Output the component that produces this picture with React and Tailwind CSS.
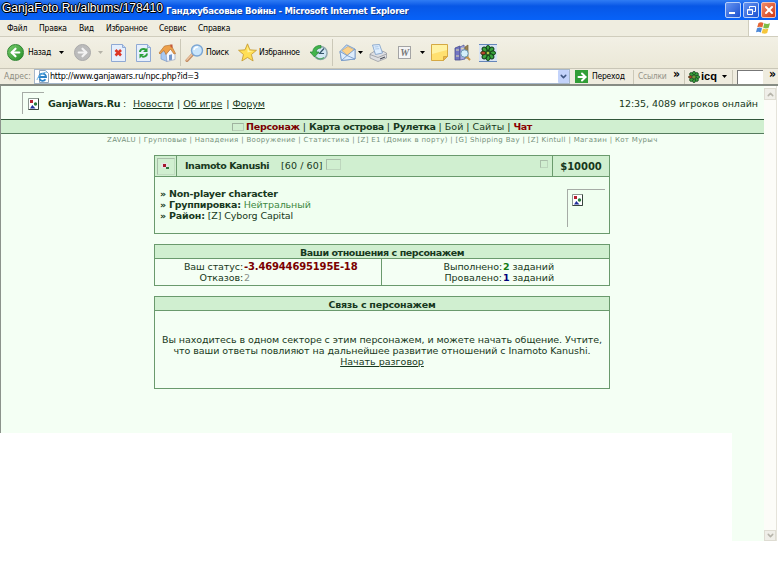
import { ArrowLeft, ArrowRight, ChevronDown, ChevronUp, X } from 'lucide-react'

const MENU = [
  { label: 'Файл', width: 'w-[32px]' },
  { label: 'Правка', width: 'w-[40px]' },
  { label: 'Вид', width: 'w-[27px]' },
  { label: 'Избранное', width: 'w-[53px]' },
  { label: 'Сервис', width: 'w-[39px]' },
  { label: 'Справка', width: 'w-[40px]' },
]

const SUB_NAV = [
  'ZAVALU', 'Групповые', 'Нападения', 'Вооружение', 'Статистика', '[Z] E1 (Домик в порту)',
  '[G] Shipping Bay', '[Z] Kintull', 'Магазин', 'Кот Мурыч',
]

// Small down triangle next to toolbar buttons
function Caret({ className = '' }) {
  return (
    <svg viewBox="0 0 5 3" className={`h-[3px] w-[5px] shrink-0 ${className}`}>
      <path d="M0 0h5L2.5 3z" fill="currentColor" />
    </svg>
  )
}

function Divider({ className = '' }) {
  return <span className={`w-px shrink-0 bg-[#cbc8b8] ${className}`} />
}

// Page sheet used by the stop and refresh buttons
function Sheet({ children }) {
  return (
    <svg viewBox="0 0 15 18" className="h-[18px] w-[15px] shrink-0">
      <path d="M.5.500h11l3 3v14H.5z" fill="#e6effc" stroke="#8fa9d4" />
      <path d="M11.500.5v3h3" fill="#c4d7f2" stroke="#8fa9d4" />
      {children}
    </svg>
  )
}

function HomeIcon() {
  return (
    <svg viewBox="0 0 18 18" className="h-[18px] w-[18px] shrink-0">
      <path d="M3 8v7l6 2.500V9L6 4z" fill="#a8c9f2" stroke="#7996c5" strokeWidth=".7" />
      <path d="M8 9.500l5-5 4 5v6l-8 2z" fill="#f7f9fd" stroke="#93a4c1" strokeWidth=".7" />
      <path d="M1 9l5.500-7L13 1l4.500 8.500-1.500.5-3.500-5L8 10.500l-2-4L2 10z" fill="#eda14b" stroke="#b77436" strokeWidth=".7" />
      <path d="M11 11l3-.7v5.500l-3 .7z" fill="#7295cb" />
      <path d="M12.500.5h2V4l-2-1z" fill="#c4593a" />
    </svg>
  )
}

function SearchIcon() {
  return (
    <svg viewBox="0 0 19 18" className="h-[18px] w-[19px] shrink-0">
      <path d="M2 16.500l6-6.500" stroke="#c48d64" strokeWidth="3.200" strokeLinecap="round" />
      <path d="M1.800 16l5.700-6" stroke="#efc6a2" strokeWidth="1.200" strokeLinecap="round" />
      <circle cx="12" cy="6.500" r="5.500" fill="#c9e5fb" stroke="#7ba6d3" strokeWidth="1.400" />
      <path d="M9 6a3.500 3.500 0 0 1 4-3" stroke="#fff" strokeWidth="1.500" fill="none" />
    </svg>
  )
}

function StarIcon() {
  return (
    <svg viewBox="0 0 18 18" className="h-[19px] w-[19px] shrink-0">
      <path d="M9 .8l2.300 5.700 6.200.4-4.800 4 1.600 6.100L9 13.700 3.700 17l1.500-6.100-4.700-4 6.100-.4z" fill="#ffdf55" stroke="#c69a32" strokeWidth=".8" />
      <path d="M9 3l1.500 4.300 4 .3L9 9z" fill="#fff6a9" />
    </svg>
  )
}

function HistoryIcon() {
  return (
    <svg viewBox="0 0 18 16" className="h-4 w-[18px] shrink-0">
      <circle cx="10.500" cy="8" r="6.600" fill="#d3e7f3" stroke="#93a8ae" strokeWidth="1.500" />
      <path d="M14 3.500L9.500 8.500H14" stroke="#36566b" strokeWidth="1.200" fill="none" />
      <path d="M11 .5C6 .2 3 3 2.700 7H0l4.500 5L9 7H6.200C6.500 4.500 8 3 11 3z" fill="#42b54b" stroke="#268236" strokeWidth=".7" />
      <path d="M6 12c2 2.500 5.500 2.500 8 .5" stroke="#53a967" strokeWidth="1.300" fill="none" />
    </svg>
  )
}

function MailIcon() {
  return (
    <svg viewBox="0 0 17 17" className="h-[17px] w-[17px] shrink-0">
      <path d="M1 7.500L7.500.8 16 5v10L2.500 16.500z" fill="#b9d6f5" stroke="#6f93c4" strokeWidth=".8" />
      <path d="M3 6.500l6-4 5.500 3-1 5-5 1z" fill="#fdd289" stroke="#c9a46b" strokeWidth=".6" />
      <path d="M1 7.500l7 4L16 5v10L2.500 16.500z" fill="#ddecfc" stroke="#6f93c4" strokeWidth=".8" />
      <path d="M2.500 16.500L8 11.500l8 3.500" fill="none" stroke="#6f93c4" strokeWidth=".8" />
    </svg>
  )
}

function PrinterIcon() {
  return (
    <svg viewBox="0 0 18 18" className="h-[18px] w-[18px] shrink-0">
      <path d="M1 10l4-2.500 2 2 6-1 .5-1.500 4 2v5L9 17.500 1 14z" fill="#dedfe2" stroke="#9a9da3" strokeWidth=".8" />
      <path d="M3.500 1l7-.5 3 8.500-7 1.500z" fill="#e0efff" stroke="#7a9cc7" strokeWidth=".8" />
      <path d="M5.500 3l4-.3M6.200 5l4-.3" stroke="#91b4db" strokeWidth=".7" />
      <path d="M1 10.500l8 3 8.500-3.500" stroke="#898d94" strokeWidth=".7" fill="none" />
      <path d="M11 15l5-2" stroke="#454951" strokeWidth="1.100" />
    </svg>
  )
}

function WordIcon() {
  return (
    <span className="flex h-[13px] w-[13px] shrink-0 items-center justify-center border border-[#a4a4a4] bg-[#f5f5f5] font-['Liberation_Serif',serif] text-[10px] leading-none font-bold text-[#777] italic">
      W
    </span>
  )
}

function NoteIcon() {
  return (
    <svg viewBox="0 0 17 17" className="h-[17px] w-[17px] shrink-0">
      <path d="M.5.5h16v12l-4 4H.5z" fill="#ffe070" stroke="#d5a944" />
      <path d="M1 1h15v5L1 10z" fill="#fff2a3" />
      <path d="M12.500 16.500v-4h4z" fill="#eab54b" stroke="#d5a944" />
    </svg>
  )
}

function BooksIcon() {
  return (
    <svg viewBox="0 0 17 18" className="h-[18px] w-[17px] shrink-0">
      <path d="M1 4l5-2v14H1z" fill="#7275c3" stroke="#474c8c" strokeWidth=".8" />
      <path d="M6 3l4-2 1 14-5 1z" fill="#a6aade" stroke="#555b9b" strokeWidth=".8" />
      <path d="M11 3l3-2v13h-3z" fill="#9b8350" stroke="#736340" strokeWidth=".7" />
      <path d="M2 6h3M2 12h3M7 5l3-1" stroke="#e4dfab" />
      <path d="M12 12l4 4" stroke="#c79548" strokeWidth="2" />
      <circle cx="10.500" cy="9.500" r="3.700" fill="#d4effa" stroke="#6f9ab5" />
    </svg>
  )
}

const PETALS = [0, 45, 90, 135, 180, 225, 315]

function Flower({ className }) {
  return (
    <svg viewBox="-8 -8 16 16" className={`shrink-0 ${className}`}>
      {PETALS.map((angle) => (
        <ellipse key={angle} cy="-4.800" rx="2.100" ry="2.700" fill="#39a33d" stroke="#123f19" strokeWidth="1" transform={`rotate(${angle})`} />
      ))}
      <ellipse cy="-4.800" rx="1.700" ry="2.500" fill="#b8452e" stroke="#3b3a14" strokeWidth="1" transform="rotate(-90)" />
      <circle r="1.600" fill="#c5d94c" stroke="#335c20" />
    </svg>
  )
}

function IePageIcon() {
  return (
    <svg viewBox="0 0 13 13" className="h-[13px] w-[13px] shrink-0">
      <path d="M3.500.5h6l3 3v9h-9z" fill="#fff" stroke="#94a6bb" />
      <path d="M10 7H3.200A3 3 0 1 1 10 7zM3.500 8.500c1 3 4.500 3 6 .8" fill="none" stroke="#2d83c8" strokeWidth="1.900" />
      <path d="M1 10C1 7 7 2 11 2" stroke="#6db7e5" fill="none" />
    </svg>
  )
}

function WindowsFlag() {
  return (
    <svg viewBox="0 0 15 13" className="h-[14px] w-[15px]">
      <path d="M2.500 1.500c2-1.200 3.500-.8 5 0L6.300 6C4.500 5 3 5 1.200 5.800z" fill="#e46635" />
      <path d="M8.300 1.800c2 1 3.500 1 5.700 0l-1.300 4.400c-2 1-3.500.9-5.500 0z" fill="#7fbd45" />
      <path d="M1 6.700c2-1 3.500-.8 5 0L4.800 11C3 10 1.800 10 0 10.800z" fill="#4d89d8" />
      <path d="M6.900 7.100c2 1 3.500.9 5.500 0l-1.200 4.500c-2 1-3.500.8-5.500-.2z" fill="#f5c63d" />
    </svg>
  )
}

function BrokenImage({ className }) {
  return (
    <svg viewBox="0 0 11 12" className={`shrink-0 ${className}`}>
      <path d="M.5.500h10v11H.5z" fill="#fff" stroke="#8d9991" />
      <path d="M10.500.5v11H.5" fill="none" stroke="#38443d" />
      <path d="M2 2h3v3H2z" fill="#b7202f" />
      <circle cx="7.500" cy="6" r="1.700" fill="#287a3b" />
      <path d="M2 10.500l2.300-3.500L7.500 10.500z" fill="#22309b" />
    </svg>
  )
}

function TitleBar() {
  return (
    <header className="relative flex h-5 items-center justify-between bg-linear-to-b from-[#2f7cf4] via-[#0757e6] via-30% to-[#0762f8] pl-[166px]">
      <h1 className="pt-px font-['DejaVu_Sans_Condensed','DejaVu_Sans',sans-serif] text-[9.500px] leading-[13px] font-bold tracking-[-0.26px] whitespace-nowrap text-white [text-shadow:1px_1px_0_#123b8f]">
        Ганджубасовые Войны - Microsoft Internet Explorer
      </h1>
      {/* Album watermark over the title */}
      <span className="absolute top-[1px] left-[2px] font-['Liberation_Sans',sans-serif] text-[12px] leading-[14px] tracking-[0.03px] whitespace-nowrap text-white [text-shadow:1px_0_#000,-1px_0_#000,0_1px_#000,0_-1px_#000,1px_1px_#000]">
        GanjaFoto.Ru/albums/178410
      </span>
      <div className="flex shrink-0 gap-[2px] pr-[2px]">
        <button className="flex h-4 w-4 items-end rounded-[2px] border border-[#b8cff9] bg-linear-to-br from-[#6694f1] to-[#1c50d0] p-[3px]">
          <span className="h-[2px] w-[6px] bg-white" />
        </button>
        <button className="flex h-4 w-4 items-center justify-center rounded-[2px] border border-[#b8cff9] bg-linear-to-br from-[#6694f1] to-[#1c50d0]">
          <svg viewBox="0 0 9 9" className="h-[9px] w-[9px]" fill="none" stroke="#fff">
            <path d="M2.500 2.500V.5h6v5h-2M.5 3.500h5v5h-5zM.5 4h5" />
          </svg>
        </button>
        <button className="flex h-4 w-[15px] items-center justify-center rounded-[2px] border border-[#f2c2b5] bg-linear-to-br from-[#f08a68] to-[#cf3711]">
          <X className="h-3 w-3 shrink-0 text-white" strokeWidth={4} />
        </button>
      </div>
    </header>
  )
}

function MenuBar() {
  return (
    <nav className="flex h-[17px] border-b border-[#d0cdbd] bg-[#efede0]">
      <div className="flex flex-1 items-center pl-[7px] text-[8.500px] leading-none tracking-[-0.22px] whitespace-nowrap">
        {MENU.map((item) => (
          <span key={item.label} className={`shrink-0 ${item.width}`}>{item.label}</span>
        ))}
      </div>
      <div className="flex w-[30px] items-center justify-center border-l border-[#d0cdbd] bg-white">
        <WindowsFlag />
      </div>
    </nav>
  )
}

function Toolbar() {
  return (
    <div className="flex h-8 items-center border-b border-[#c9c6b7] bg-linear-to-b from-[#f2f0e5] to-[#ebe8d7] pl-[7px] text-[8.500px] tracking-[-0.3px] whitespace-nowrap">
      <span className="flex h-[17px] w-[17px] shrink-0 items-center justify-center rounded-full border border-[#2d8430] bg-linear-to-br from-[#75cb6b] to-[#229027]">
        <ArrowLeft className="h-[13px] w-[13px] text-white" strokeWidth={4} />
      </span>
      <span className="ml-[4px] w-[31px] shrink-0">Назад</span>
      <Caret />
      <span className="ml-[10px] flex h-[17px] w-[17px] shrink-0 items-center justify-center rounded-full border border-[#aaa] bg-[#bbb]">
        <ArrowRight className="h-[13px] w-[13px] text-[#f3f3f3]" strokeWidth={4} />
      </span>
      <Caret className="mr-[8px] ml-[7px] text-[#b5b3a8]" />
      <Sheet>
        <path d="M4.500 6l5.500 5.500M10 6l-5.500 5.500" stroke="#dd3524" strokeWidth="2.600" />
      </Sheet>
      <span className="w-[10px] shrink-0" />
      <Sheet>
        <path d="M4 8c0-3 4-4 6-2M11 9.500c0 3-4 4-5 2.500" stroke="#2ca13d" strokeWidth="2" fill="none" />
        <path d="M11.500 3.500V8H7zM3.500 14.500V10H8z" fill="#2ca13d" />
      </Sheet>
      <span className="w-[7px] shrink-0" />
      <HomeIcon />
      <Divider className="mr-[4px] ml-[4px] h-[27px]" />
      <SearchIcon />
      <span className="ml-[2px] w-[32px] shrink-0">Поиск</span>
      <StarIcon />
      <span className="ml-[2px] w-[51px] shrink-0">Избранное</span>
      <HistoryIcon />
      <Divider className="mr-[6px] ml-[4px] h-[27px]" />
      <MailIcon />
      <Caret className="ml-[2px]" />
      <span className="w-[6px] shrink-0" />
      <PrinterIcon />
      <span className="w-[11px] shrink-0" />
      <WordIcon />
      <Caret className="mr-[6px] ml-[9px]" />
      <NoteIcon />
      <span className="w-[6px] shrink-0" />
      <BooksIcon />
      <span className="ml-[8px] flex h-[18px] w-[18px] shrink-0 items-center justify-center border-y border-[#6586ba] bg-[#d7e3f3]">
        <Flower className="h-[16px] w-[16px]" />
      </span>
    </div>
  )
}

function AddressBar() {
  return (
    <div className="flex h-[15px] items-center bg-[#efecdf] text-[8.500px] tracking-[-0.25px] whitespace-nowrap">
      <span className="w-[34px] shrink-0 pl-[4px] tracking-normal text-[#8d8b80]">Адрес:</span>
      <div className="flex h-[15px] w-[536px] shrink-0 items-center border border-[#a6b7ca] bg-white pl-px">
        <IePageIcon />
        <span className="ml-px flex-1 text-[9px] tracking-[-0.26px]">http://www.ganjawars.ru/npc.php?id=3</span>
        <span className="flex h-[13px] w-[11px] items-center justify-center rounded-[1px] bg-[#c3d3fb]">
          <ChevronDown className="h-[9px] w-[9px] text-[#405783]" strokeWidth={4} />
        </span>
      </div>
      <span className="ml-[5px] flex h-[13px] w-[13px] shrink-0 items-center justify-center bg-[#319e37]">
        <ArrowRight className="h-3 w-3 text-white" strokeWidth={4} />
      </span>
      <span className="ml-[4px] w-[41px] shrink-0">Переход</span>
      <Divider className="h-[14px]" />
      <span className="ml-[4px] w-[35px] shrink-0 text-[#96948a]">Ссылки</span>
      <span className="w-[11px] shrink-0 pb-[6px] text-[12px] leading-none font-bold">»</span>
      <Divider className="mr-[3px] h-[14px]" />
      <Flower className="h-[12px] w-[12px]" />
      <span className="ml-px w-[21px] shrink-0 font-['Liberation_Sans',sans-serif] text-[11px] leading-none font-bold tracking-normal">icq</span>
      <Caret />
      <Divider className="mr-[4px] ml-[5px] h-[14px]" />
      <span className="h-[14px] w-[26px] shrink-0 border-t border-l border-[#777] bg-white" />
      <span className="ml-[6px] pb-[6px] text-[12px] leading-none font-bold">»</span>
    </div>
  )
}

function SiteHeader() {
  return (
    <div className="flex h-[33px] shrink-0 items-center pl-[21px] text-[9.500px] whitespace-nowrap">
      <span className="mt-[1px] flex h-[22px] w-[22px] shrink-0 items-center justify-center border-t border-l border-[#a6aca6]">
        <BrokenImage className="h-3 w-[11px]" />
      </span>
      <div className="flex flex-1 items-center pt-[3px]">
        <b className="ml-[4px] w-[72px] shrink-0 tracking-[-0.25px]">GanjaWars.Ru</b>
        <span className="w-[13px] shrink-0 pl-[3px]">:</span>
        <a className="w-[44px] shrink-0 tracking-[-0.1px] underline">Новости</a>
        <span>|</span>
        <a className="ml-[3px] w-[43px] shrink-0 tracking-[-0.05px] underline">Об игре</a>
        <span>|</span>
        <a className="ml-[3px] tracking-[-0.1px] underline">Форум</a>
        <span className="ml-auto pr-[6px] tracking-[-0.04px]">12:35, 4089 игроков онлайн</span>
      </div>
    </div>
  )
}

function MainNav() {
  return (
    <>
      <div className="flex h-[15px] shrink-0 items-center border-t border-b border-[#31573a] border-b-[#557b5d] bg-[#d0efd0] pt-px pl-[231px] text-[9.500px] whitespace-pre">
        <span className="mr-[2px] mb-px h-2 w-3 shrink-0 border border-[#b7ceb7] border-t-[#9fb39f] border-l-[#9fb39f]" />
        <p>
          <b className="tracking-[-0.25px] text-[#7b0000]">Персонаж</b> | <b className="tracking-[-0.37px]">Карта острова</b> | <b className="tracking-[-0.35px]">Рулетка</b> | Бой | Сайты | <b className="tracking-[-0.35px] text-[#8b0000]">Чат</b>
        </p>
      </div>
      <div className="h-[12px] shrink-0 pt-px pl-[106px] text-[7px] leading-[11px] tracking-[0.33px] whitespace-nowrap text-[#75917b]">
        {SUB_NAV.join(' | ')}
      </div>
    </>
  )
}

function CharacterPanel() {
  return (
    <section className="h-[79px] w-[456px] border border-[#6a9a6d] bg-[#f0fff0]">
      <div className="flex h-[21px] items-center border-b border-[#6a9a6d] bg-[#d0efd0]">
        <span className="flex h-full w-[22px] items-center justify-center border-r border-[#6a9a6d]">
          <span className="flex h-[17px] w-[18px] items-center justify-center border border-[#c2dcc2] border-t-[#a9bea9] border-l-[#a9bea9]">
            <svg viewBox="0 0 9 7" className="h-[7px] w-[9px]">
              <path d="M0 0h7v5H0z" fill="#e2e6e4" />
              <path d="M2 1h3v3H2z" fill="#a5182c" />
              <path d="M5 4h3v2H5z" fill="#2f7a3f" />
            </svg>
          </span>
        </span>
        <b className="ml-[8px] w-[96px] pt-px text-[9.500px] tracking-[-0.42px] whitespace-nowrap">Inamoto Kanushi</b>
        <span className="w-[45px] pt-px text-[9.500px] tracking-[0.08px] whitespace-nowrap">[60 / 60]</span>
        <span className="mb-[3px] h-[11px] w-[15px] border border-[#bdd6bd] border-t-[#a9bea9] border-l-[#a9bea9]" />
        <span className="mr-[4px] mb-[5px] ml-auto h-2 w-2 border border-[#bdd6bd] border-t-[#a9bea9] border-l-[#a9bea9]" />
        <b className="flex h-full w-[57px] items-center justify-center border-l border-[#6a9a6d] pt-px text-[10px] tracking-[-0.05px]">$10000</b>
      </div>
      <div className="flex h-[56px] pt-[12px] pl-[5px]">
        <div className="text-[9.500px] leading-[10.800px] tracking-[-0.1px] whitespace-nowrap">
          <p><b className="tracking-[-0.22px]">» Non-player character</b></p>
          <p><b className="tracking-[-0.25px]">» Группировка:</b> <span className="text-[#3c883f]">Нейтральный</span></p>
          <p><b className="tracking-[-0.2px]">» Район:</b> [Z] Cyborg Capital</p>
        </div>
        <span className="mr-[4px] ml-auto h-[38px] w-[38px] border-t border-l border-[#a6aca6] pt-[4px] pl-[4px]">
          <BrokenImage className="h-3 w-[11px]" />
        </span>
      </div>
    </section>
  )
}

function RelationsPanel() {
  return (
    <section className="mt-[10px] h-[42px] w-[456px] border border-[#6a9a6d]">
      <h2 className="h-[14px] border-b border-[#6a9a6d] bg-[#d0efd0] text-center text-[9.500px] leading-[15px] font-bold tracking-[-0.42px]">Ваши отношения с персонажем</h2>
      <div className="flex h-[26px] text-[9.500px] leading-[11.500px] whitespace-nowrap">
        <div className="grid w-[227px] grid-cols-[88px_1fr] content-center gap-x-px border-r border-[#6a9a6d]">
          <span className="text-right tracking-[-0.1px]">Ваш статус:</span>
          <b className="text-[10px] tracking-[-0.16px] text-[#7b0000]">-3.46944695195E-18</b>
          <span className="text-right tracking-[-0.1px]">Отказов:</span>
          <span className="text-[#8a928b]">2</span>
        </div>
        <div className="grid flex-1 grid-cols-[120px_1fr] content-center gap-x-px">
          <span className="text-right tracking-[-0.1px]">Выполнено:</span>
          <span className="tracking-[-0.05px]"><b className="text-[#137b13]">2</b> заданий</span>
          <span className="text-right">Провалено:</span>
          <span className="tracking-[-0.05px]"><b className="text-[#00007b]">1</b> заданий</span>
        </div>
      </div>
    </section>
  )
}

function ContactPanel() {
  return (
    <section className="mt-[10px] h-[93px] w-[456px] border border-[#6a9a6d]">
      <h2 className="h-[14px] border-b border-[#6a9a6d] bg-[#d0efd0] text-center text-[9.500px] leading-[15px] font-bold tracking-[-0.24px]">Связь с персонажем</h2>
      <div className="pt-[24px] text-center text-[9.500px] leading-[10.800px] tracking-[-0.07px] whitespace-nowrap">
        <p>Вы находитесь в одном секторе с этим персонажем, и можете начать общение. Учтите,</p>
        <p className="tracking-[-0.05px]">что ваши ответы повлияют на дальнейшее развитие отношений с Inamoto Kanushi.</p>
        <a className="tracking-normal underline">Начать разговор</a>
      </div>
    </section>
  )
}

function ScrollBar() {
  return (
    <div className="flex w-[13px] shrink-0 flex-col justify-between border-r border-[#e5e3da] bg-[#fcfcf8]">
      <span className="mt-[2px] flex h-[12px] items-center justify-center border border-[#dedcd2] bg-[#efeee8]">
        <ChevronUp className="h-[9px] w-[9px] text-[#b6b4aa]" strokeWidth={4} />
      </span>
      <span className="flex h-[11px] items-center justify-center border border-[#dedcd2] bg-[#efeee8]">
        <ChevronDown className="h-[9px] w-[9px] text-[#b6b4aa]" strokeWidth={4} />
      </span>
    </div>
  )
}

export default function App() {
  return (
    <div className="h-[584px] w-[778px] overflow-hidden bg-white font-['DejaVu_Sans',sans-serif] text-[#173820]">
      <TitleBar />
      <div className="font-['DejaVu_Sans_Condensed','DejaVu_Sans',sans-serif] text-black">
        <MenuBar />
        <Toolbar />
        <AddressBar />
      </div>
      <div className="flex h-[457px] border-t-2 border-[#878c84] pr-px">
        <main className="flex min-w-0 flex-1 bg-[#f4fff4]">
          <div className="flex w-full flex-col">
            <div className="h-[347px] shrink-0 border-l border-[#8c938c]">
              <div className="flex flex-col">
                <SiteHeader />
                <MainNav />
              </div>
              <div className="pt-[9px] pl-[153px]">
                <CharacterPanel />
                <RelationsPanel />
                <ContactPanel />
              </div>
            </div>
            <div className="w-[732px] flex-1 bg-white" />
          </div>
        </main>
        <ScrollBar />
      </div>
    </div>
  )
}
